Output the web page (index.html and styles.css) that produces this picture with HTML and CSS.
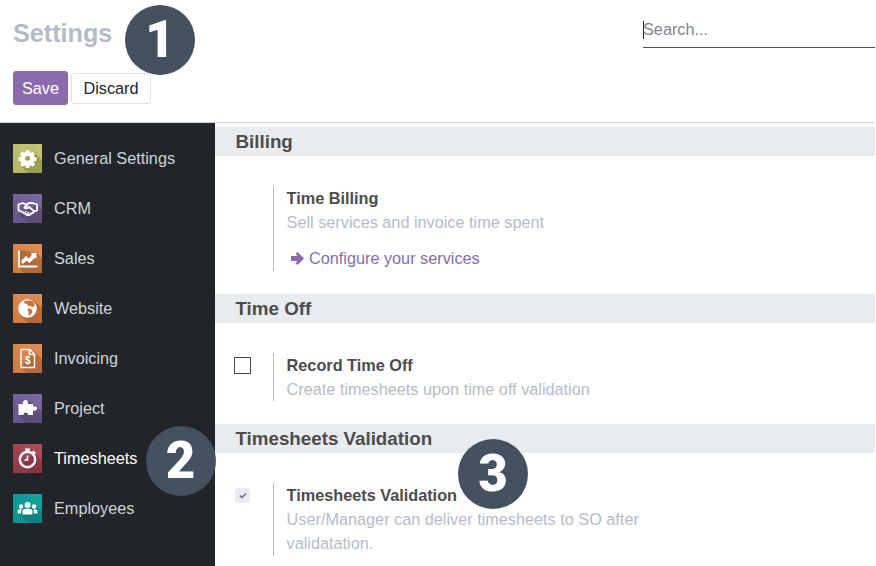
FILE: index.html
```html
<!DOCTYPE html>
<html lang="en">
<head>
<meta charset="utf-8">
<title>Settings</title>
<link rel="stylesheet" href="styles.css">
</head>
<body>
<svg class="defs" width="0" height="0" aria-hidden="true">
  <defs>
    <linearGradient id="g-olive" x1="0" y1="1" x2="1" y2="0"><stop offset="0" stop-color="#b5b662"/><stop offset="1" stop-color="#c6c67a"/></linearGradient>
    <linearGradient id="g-purple" x1="0" y1="1" x2="1" y2="0"><stop offset="0" stop-color="#62548a"/><stop offset="1" stop-color="#7c6ca2"/></linearGradient>
    <linearGradient id="g-orange" x1="0" y1="1" x2="1" y2="0"><stop offset="0" stop-color="#cf7a42"/><stop offset="1" stop-color="#e08e58"/></linearGradient>
    <linearGradient id="g-red" x1="0" y1="1" x2="1" y2="0"><stop offset="0" stop-color="#8f3a46"/><stop offset="1" stop-color="#b04e5a"/></linearGradient>
    <linearGradient id="g-teal" x1="0" y1="1" x2="1" y2="0"><stop offset="0" stop-color="#0b8f8d"/><stop offset="1" stop-color="#12a5a2"/></linearGradient>
  </defs>
</svg>
<div class="app">
  <header class="top">
    <div class="top-left">
      <h1 class="title">Settings</h1>
      <div class="actions">
        <button class="btn btn-save">Save</button>
        <button class="btn btn-discard">Discard</button>
      </div>
    </div>
    <div class="search"><span class="caret"></span><span class="search-ph">Search...</span></div>
  </header>
  <div class="main">
    <nav class="side">
      <div class="nav-item">
        <svg class="ico" viewBox="0 0 29 29"><rect width="29" height="29" fill="url(#g-olive)"/><path d="M6 20 L20 7 L29 16 V29 H15Z" fill="#8d8d46" opacity=".65"/><path fill="#fff" fill-rule="evenodd" d="M12.700 5.500h3.600l.5 2.300 1.500.6 2-1.300 2.500 2.500-1.300 2 .6 1.500 2.300.5v3.600l-2.300.5-.6 1.500 1.300 2-2.500 2.500-2-1.300-1.500.6-.5 2.300h-3.600l-.5-2.300-1.500-.6-2 1.300-2.500-2.500 1.300-2-.6-1.500-2.300-.5v-3.600l2.300-.5.6-1.500-1.300-2 2.500-2.500 2 1.300 1.500-.6ZM14.500 11.700a2.800 2.800 0 1 0 0 5.600a2.800 2.800 0 0 0 0-5.600Z" transform="translate(1.450 1.300) scale(.9)"/></svg>
        <span class="nav-text">General Settings</span>
      </div>
      <div class="nav-item">
        <svg class="ico" viewBox="0 0 29 29"><rect width="29" height="29" fill="url(#g-purple)"/><path d="M5 20 L24 11 L29 16 V29 H14Z" fill="#4e4169" opacity=".6"/><path fill="none" stroke="#fff" stroke-width="1.800" stroke-linejoin="round" stroke-linecap="round" d="M5.500 10.500 L9.500 9 L13 10.500 L16 9 L19.500 9 L24 10.500 V16.500 L21.500 17.500 L16.500 21 L14 21 L8.500 17.500 L5.500 16.500Z"/><path fill="none" stroke="#fff" stroke-width="1.800" stroke-linejoin="round" stroke-linecap="round" d="M15 10 L11.500 13.500 C13 15 14.500 14.500 16 13 L21 17"/><path fill="none" stroke="#fff" stroke-width="1.400" stroke-linecap="round" d="M11 19.500 L13 17.500 M13.500 20.500 L15.500 18.500 M16.500 20.500 L18 19"/></svg>
        <span class="nav-text">CRM</span>
      </div>
      <div class="nav-item">
        <svg class="ico" viewBox="0 0 29 29"><rect width="29" height="29" fill="url(#g-orange)"/><path d="M5 23 L6 6 L24 9 L29 15 V29 H11Z" fill="#9c5a2e" opacity=".6"/><path fill="none" stroke="#fff" stroke-width="1.800" d="M6 6.500 V22.500 H24.500"/><path fill="#fff" d="M8.500 19.500 L8.500 16.500 L13 12 L16 14.500 L19 10.500 L17.500 9 H23.500 V15 L22 13.500 L16.500 19 L13.500 16.500 L10.500 19.500Z"/></svg>
        <span class="nav-text">Sales</span>
      </div>
      <div class="nav-item">
        <svg class="ico" viewBox="0 0 29 29"><rect width="29" height="29" fill="url(#g-orange)"/><path d="M7 21 L21 6 L29 14 V29 H15Z" fill="#9c5a2e" opacity=".6"/><circle cx="14.500" cy="14.500" r="9.300" fill="#fff"/><path fill="#c9743f" d="M11 7.500 C14 6 18.500 6.200 21 8.500 L22 11.500 L19.500 13 L17.500 12 L15 12 L14 10 L11.500 9.500Z M14 14.500 L18.500 15 L19.500 18 L17 21.500 L15.500 21.500 L15.500 18Z"/></svg>
        <span class="nav-text">Website</span>
      </div>
      <div class="nav-item">
        <svg class="ico" viewBox="0 0 29 29"><rect width="29" height="29" fill="url(#g-orange)"/><path d="M8 24 L20 6 L29 15 V29 H13Z" fill="#9c5a2e" opacity=".6"/><path fill="none" stroke="#fff" stroke-width="1.400" d="M8 5.500 H17 L21.500 10 V23.500 H8Z M16.500 5.500 V10.500 H21.500"/><text class="ico-dollar" x="14.700" y="20.200">$</text></svg>
        <span class="nav-text">Invoicing</span>
      </div>
      <div class="nav-item">
        <svg class="ico" viewBox="0 0 29 29"><rect width="29" height="29" fill="url(#g-purple)"/><path d="M6 22 L16 7 L29 18 V29 H13Z" fill="#4e4169" opacity=".6"/><path fill="#fff" d="M5.500 10 H10 C9 5.500 15.500 4 15 10 H20 V12.500 C25.500 11 25.500 18 20 16.500 V21 H15 C15.500 17.500 10 17.500 10.500 21 H5.500Z"/></svg>
        <span class="nav-text">Project</span>
      </div>
      <div class="nav-item nav-active">
        <svg class="ico" viewBox="0 0 29 29"><rect width="29" height="29" fill="url(#g-red)"/><path d="M8 22 L21 9 L29 17 V29 H15Z" fill="#7a2f38" opacity=".6"/><circle cx="14.500" cy="15.500" r="7.700" fill="none" stroke="#fff" stroke-width="2.400"/><path fill="none" stroke="#fff" stroke-width="1.600" d="M14.500 11.500 V16 H11.500"/><path fill="#fff" d="M12 4.500 H17 V6.500 H15.500 V8 H13.500 V6.500 H12Z M20.500 6.500 L23 9 L21.500 10.500 L19 8Z"/></svg>
        <span class="nav-text">Timesheets</span>
      </div>
      <div class="nav-item">
        <svg class="ico" viewBox="0 0 29 29"><rect width="29" height="29" fill="url(#g-teal)"/><path d="M6 19 L20 12 L29 18 V29 H16Z" fill="#0a7472" opacity=".6"/><g fill="#fff"><circle cx="14.500" cy="11" r="3"/><circle cx="8" cy="12.500" r="2.200"/><circle cx="21" cy="12.500" r="2.200"/><path d="M9.500 20.500 V17 C9.500 15 12 14.700 14.500 14.700 C17 14.700 19.500 15 19.500 17 V20.500Z"/><path d="M4.500 19.500 V17 C4.500 15.500 6.500 15.200 8.500 15.200 L8 19.500Z M24.500 19.500 V17 C24.500 15.500 22.500 15.200 20.500 15.200 L21 19.500Z"/></g></svg>
        <span class="nav-text">Employees</span>
      </div>
    </nav>
    <section class="content">
      <h2 class="sec">Billing</h2>
      <div class="row">
        <div class="box"></div>
        <div class="desc">
          <div class="label">Time Billing</div>
          <div class="muted">Sell services and invoice time spent</div>
          <a class="link"><svg class="arrow" viewBox="0 0 13 13"><path fill="currentColor" d="M6.500 0 L13 6.500 L6.500 13 L4.500 11 L6.500 9 H0 V4 H6.500 L4.500 2 Z"/></svg>Configure your services</a>
        </div>
      </div>
      <h2 class="sec">Time Off</h2>
      <div class="row">
        <div class="box"><span class="check"></span></div>
        <div class="desc">
          <div class="label">Record Time Off</div>
          <div class="muted">Create timesheets upon time off validation</div>
        </div>
      </div>
      <h2 class="sec">Timesheets Validation</h2>
      <div class="row">
        <div class="box"><span class="check check-on"><svg class="tick" viewBox="0 0 8 7"><path fill="none" stroke="#7c63a8" stroke-width="1.600" d="M1 3.500 L3 5.500 L7 1.500"/></svg></span></div>
        <div class="desc">
          <div class="label">Timesheets Validation</div>
          <div class="muted muted-wrap">User/Manager can deliver timesheets to SO after validatation.</div>
        </div>
      </div>
    </section>
  </div>
  <div class="badge badge-1">1</div>
  <div class="badge badge-2">2</div>
  <div class="badge badge-3">3</div>
</div>
</body>
</html>
```
FILE: styles.css
```css
html, body { margin: 0; padding: 0; background: #fff; overflow: hidden; }
* { box-sizing: border-box; }
.defs { position: absolute; }
.app {
  position: relative;
  width: 875px;
  height: 566px;
  overflow: hidden;
  font-family: "Liberation Sans", Arial, sans-serif;
  font-size: 16.25px;
  color: #4c4c4c;
}
.top {
  height: 123px;
  border-bottom: 1px solid #ced4da;
  display: flex;
  justify-content: space-between;
}
.top-left { padding: 19px 0 0 13px; }
.title {
  margin: 0;
  font-size: 25.200px;
  line-height: 29px;
  font-weight: 700;
  color: #b4bcc7;
}
.actions { display: flex; align-items: center; gap: 3px; margin-top: 23px; }
.btn {
  font: inherit;
  padding: 0;
  border-radius: 3px;
}
.btn-save {
  width: 55px;
  height: 34px;
  background: #8a6cae;
  border: 1px solid #8a6cae;
  color: #fff;
}
.btn-discard {
  width: 80px;
  height: 31px;
  background: #fff;
  border: 1px solid #dee2e6;
  color: #212529;
}
.search {
  width: 232px;
  height: 48px;
  border-bottom: 1px solid #495057;
  padding: 21px 0 0 0;
  display: flex;
  align-items: flex-start;
  line-height: 18px;
}
.caret { width: 1px; height: 18px; background: #212529; flex: none; margin-right: -1px; }
.search-ph { color: #7f858b; margin-top: -1px; }
.main { display: flex; height: 443px; }
.side {
  width: 215px;
  background: #212529;
  padding-top: 10px;
  flex: none;
}
.nav-item {
  height: 50px;
  padding-left: 13px;
  display: flex;
  align-items: center;
  gap: 12px;
  color: #ced4da;
}
.nav-text { padding-top: 1px; }
.nav-active { color: #fff; }
.ico { width: 29px; height: 29px; display: block; flex: none; }
.ico-dollar { font-size: 10px; font-weight: 700; fill: #fff; text-anchor: middle; }
.content { flex: 1; padding-top: 4px; }
.sec {
  margin: 0;
  height: 29px;
  background: #e9ecef;
  padding-left: 20.500px;
  font-size: 18.750px;
  line-height: 29px;
  font-weight: 700;
  color: #4c4c4c;
}
.row { display: flex; padding: 30px 0 22.250px; }
.box { width: 58px; flex: none; padding: 4px 0 0 19px; }
.check {
  display: block;
  width: 17px;
  height: 17px;
  border: 1.500px solid #4c4c4c;
  background: #fff;
}
.check-on {
  width: 15px;
  height: 15px;
  margin-top: 1px;
  margin-left: 1px;
  border: 0;
  border-radius: 3px;
  background: #e9ecef;
  display: flex;
  align-items: center;
  justify-content: center;
}
.tick { width: 8px; height: 7px; display: block; }
.desc { border-left: 1px solid #b9b9b9; padding-left: 12.600px; line-height: 24.375px; }
.label { font-weight: 700; }
.muted { color: #b4bcc7; }
.muted-wrap { width: 380px; }
.link { display: flex; align-items: center; margin-top: 11.500px; padding-bottom: 0.650px; padding-left: 4.400px; color: #8a6cae; }
.arrow { width: 13px; height: 13px; margin-right: 5px; display: block; }
.badge {
  position: absolute;
  width: 70px;
  height: 70px;
  border-radius: 50%;
  background: #435160;
  color: #fff;
  font-family: Roboto, "Liberation Sans", sans-serif;
  font-size: 51px;
  font-weight: 900;
  line-height: 70px;
  text-align: center;
}
.badge-1 { left: 125px; top: 5px; }
.badge-2 { left: 145.500px; top: 426px; }
.badge-3 { left: 458px; top: 439px; }
```
